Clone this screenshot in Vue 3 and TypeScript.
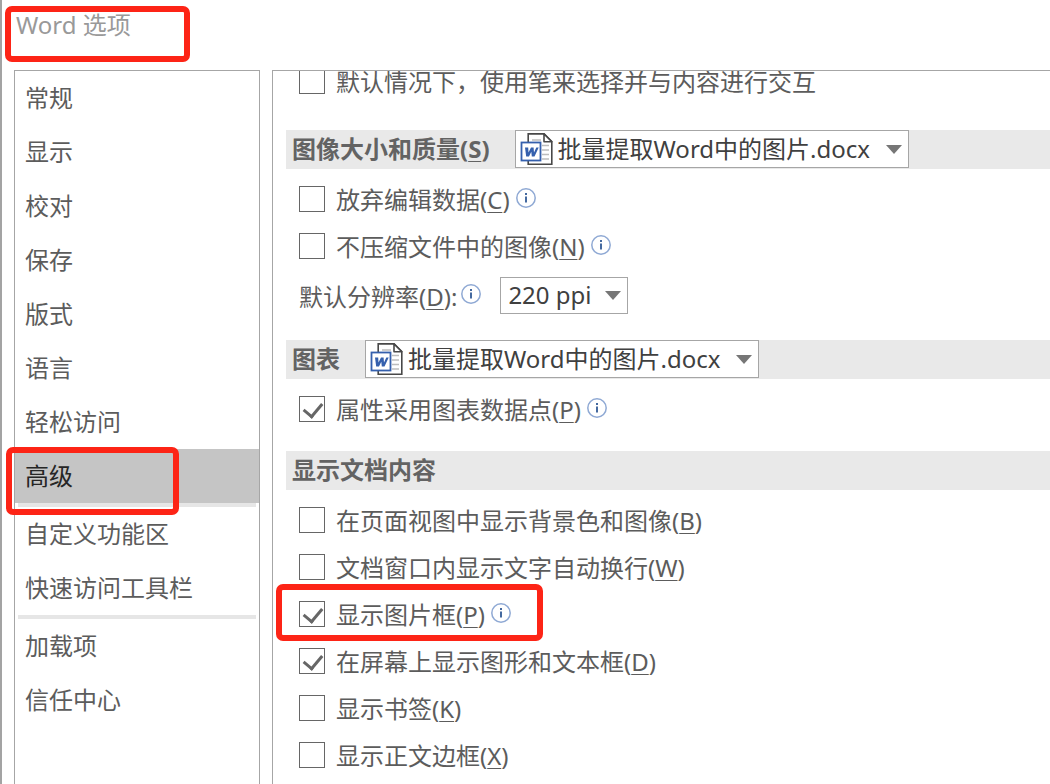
<script setup lang="ts">
import { ref } from 'vue'

interface Option {
  id: string
  text: string
  accessKey?: string
  info?: boolean
  checked: boolean
  framed?: boolean
}

const documentName = '批量提取Word中的图片.docx'

const groups = [
  ['常规', '显示', '校对', '保存', '版式', '语言', '轻松访问', '高级'],
  ['自定义功能区', '快速访问工具栏'],
  ['加载项', '信任中心'],
]
const current = ref('高级')

const penOptions = ref<Option[]>([
  { id: 'pen', text: '默认情况下，使用笔来选择并与内容进行交互', checked: false },
])
const imageOptions = ref<Option[]>([
  { id: 'discard', text: '放弃编辑数据', accessKey: 'C', info: true, checked: false },
  { id: 'nocompress', text: '不压缩文件中的图像', accessKey: 'N', info: true, checked: false },
])
const chartOptions = ref<Option[]>([
  { id: 'datapoint', text: '属性采用图表数据点', accessKey: 'P', info: true, checked: true },
])
const contentOptions = ref<Option[]>([
  { id: 'background', text: '在页面视图中显示背景色和图像', accessKey: 'B', checked: false },
  { id: 'wrap', text: '文档窗口内显示文字自动换行', accessKey: 'W', checked: false },
  { id: 'placeholder', text: '显示图片框', accessKey: 'P', info: true, checked: true, framed: true },
  { id: 'drawings', text: '在屏幕上显示图形和文本框', accessKey: 'D', checked: true },
  { id: 'bookmarks', text: '显示书签', accessKey: 'K', checked: false },
  { id: 'boundaries', text: '显示正文边框', accessKey: 'X', checked: false },
])

const sections = [
  { id: 'pen-section', title: '', accessKey: '', picker: false, resolution: false, options: penOptions },
  { id: 'image-section', title: '图像大小和质量', accessKey: 'S', picker: true, resolution: true, options: imageOptions },
  { id: 'chart-section', title: '图表', accessKey: '', picker: true, resolution: false, options: chartOptions },
  { id: 'content-section', title: '显示文档内容', accessKey: '', picker: false, resolution: false, options: contentOptions },
]
</script>

<template>
  <div class="window">
    <header class="titlebar">
      <h1>Word 选项</h1>
      <span class="frame frame-title"></span>
    </header>

    <div class="body">
      <nav class="sidebar">
        <ul v-for="(group, g) in groups" :key="g">
          <li v-for="name in group" :key="name">
            <button type="button" :class="{ active: name === current }" @click="current = name">{{ name }}</button>
            <span v-if="name === '高级'" class="frame frame-nav"></span>
          </li>
        </ul>
      </nav>

      <main class="content">
        <section v-for="section in sections" :key="section.id">
          <div v-if="section.title" class="heading">
            <h2>
              <label v-if="section.picker" :for="section.id">{{ section.title }}<template v-if="section.accessKey">(<u>{{ section.accessKey }}</u>)</template></label>
              <template v-else>{{ section.title }}</template>
            </h2>
            <div v-if="section.picker" class="combo">
              <svg class="doc" width="34" height="34" viewBox="0 0 34 34" aria-hidden="true">
                <path d="M8.200 1.900H24l7.800 7.800v22.500H8.200z" fill="#fff" stroke="#484848" stroke-width="1.600" />
                <path d="M24 1.900v7.800h7.800z" fill="#fff" stroke="#484848" stroke-width="1.600" stroke-linejoin="round" />
                <path d="M12 8h9M22 13.500h7M22 18h7M22 22.500h7M22 27h7" stroke="#bdbdbd" stroke-width="1.500" />
                <rect x="1.500" y="10.500" width="19" height="18" fill="#fff" stroke="#3560ad" stroke-width="1.800" />
                <path d="M5 15.500h3.200l.3 5 2.500-5h2.600l.4 5 2.300-5h2.400l-4.200 9h-2.700l-.5-4.800-2.300 4.800H6.200z" fill="#3560ad" />
              </svg>
              <select :id="section.id">
                <option>{{ documentName }}</option>
              </select>
              <svg class="arrow" width="16" height="9" viewBox="0 0 16 9" aria-hidden="true"><path d="M0 0h16L8 9z" fill="#767676" /></svg>
            </div>
          </div>

          <div class="options">
            <div v-for="option in section.options.value" :key="option.id" class="row">
              <input :id="option.id" v-model="option.checked" type="checkbox" />
              <label :for="option.id">{{ option.text }}<template v-if="option.accessKey">(<u>{{ option.accessKey }}</u>)</template></label>
              <svg v-if="option.info" class="info" width="20" height="20" viewBox="0 0 20 20" aria-hidden="true">
                <circle cx="10" cy="10" r="9.200" fill="#fff" stroke="#8fa9d4" stroke-width="1.500" />
                <path d="M10 5v2M10 8.500v6" stroke="#44699f" stroke-width="2" />
              </svg>
              <span v-if="option.framed" class="frame frame-option"></span>
            </div>
            <div v-if="section.resolution" class="row resolution">
              <label for="ppi">默认分辨率(<u>D</u>):</label>
              <svg class="info" width="20" height="20" viewBox="0 0 20 20" aria-hidden="true">
                <circle cx="10" cy="10" r="9.200" fill="#fff" stroke="#8fa9d4" stroke-width="1.500" />
                <path d="M10 5v2M10 8.500v6" stroke="#44699f" stroke-width="2" />
              </svg>
              <div class="combo small">
                <select id="ppi">
                  <option>220 ppi</option>
                </select>
                <svg class="arrow" width="16" height="9" viewBox="0 0 16 9" aria-hidden="true"><path d="M0 0h16L8 9z" fill="#767676" /></svg>
              </div>
            </div>
          </div>
        </section>
      </main>
    </div>
  </div>
</template>

<style>
body {
  margin: 0;
  background: #fff;
}
</style>

<style scoped>
* {
  box-sizing: border-box;
}

.window {
  display: flex;
  flex-direction: column;
  height: 100vh;
  overflow: hidden;
  border-left: 2px solid #a3a3a3;
  background: #fff;
  color: #5c5c5c;
  font-family: "Noto Sans", "Noto Sans CJK SC", sans-serif;
  font-size: 24px;
  line-height: 32px;
}

button,
select {
  font: inherit;
  color: inherit;
}

.titlebar {
  position: relative;
  flex: none;
  height: 70px;
  padding: 9px 14px;
}

h1 {
  margin: 0;
  font-size: 24px;
  font-weight: 400;
  line-height: 32px;
  color: #999;
}

.body {
  display: flex;
  flex: 1;
  gap: 12px;
  min-height: 0;
  padding-left: 12px;
}

.sidebar {
  flex: none;
  width: 246px;
  border: 1px solid #a6a6a6;
  border-bottom: 0;
}

ul {
  margin: 0;
  padding: 0;
  list-style: none;
}

ul + ul::before {
  content: "";
  display: block;
  height: 4px;
  margin: 0 3px;
  background: #e6e6e6;
}

li {
  position: relative;
}

li button {
  display: block;
  width: 100%;
  height: 54px;
  padding: 0 10px;
  border: 0;
  background: none;
  text-align: left;
}

li button.active {
  background: #c5c5c5;
  color: #262626;
}

.content {
  flex: 1;
  min-width: 0;
  overflow: hidden;
  padding-left: 13px;
  border-top: 1px solid #a6a6a6;
  border-left: 1px solid #a6a6a6;
}

section:first-child {
  margin-top: -20px;
}

section + section {
  margin-top: 19px;
}

section:first-child + section {
  margin-top: 26px;
}

.heading {
  display: flex;
  gap: 25px;
  height: 39px;
  padding-left: 6px;
  background: #e9e9e9;
}

h2 {
  margin: 0;
  font-size: 24px;
  font-weight: 700;
  line-height: 38px;
  color: #636363;
}

u {
  text-decoration-thickness: 1px;
  text-underline-offset: 3px;
}

.combo {
  position: relative;
  display: flex;
  align-items: center;
  width: 394px;
  height: 38px;
  border: 1px solid #a6a6a6;
  background: #fff;
  color: #404040;
}

.combo select {
  width: 100%;
  height: 100%;
  padding: 0 0 0 42px;
  border: 0;
  background: none;
  appearance: none;
}

.combo svg {
  position: absolute;
  pointer-events: none;
}

.doc {
  left: 4px;
}

.arrow {
  right: 6px;
}

.combo.small {
  width: 128px;
  height: 37px;
  margin-left: 19px;
}

.combo.small select {
  padding-left: 7px;
}

.options {
  padding: 6px 0 0 13px;
}

.row {
  position: relative;
  display: flex;
  align-items: center;
  height: 47px;
}

.row label {
  padding-top: 3px;
}

.resolution {
  height: 52px;
}

input {
  flex: none;
  width: 26px;
  height: 26px;
  margin: 0 11px 0 0;
  border: 1px solid #666;
  background: #fff;
  appearance: none;
}

input:checked::before {
  content: "";
  display: block;
  width: 9px;
  height: 15px;
  margin: 2px 0 0 7px;
  border: solid #666;
  border-width: 0 3px 3px 0;
  transform: rotate(40deg);
}

.info {
  flex: none;
  margin: 0 0 2px 6px;
}

.resolution .info {
  margin-left: 4px;
}

.frame {
  position: absolute;
  z-index: 1;
  border: 6px solid #fd2416;
  border-radius: 7px;
  pointer-events: none;
}

.frame-title {
  left: 3px;
  top: 6px;
  width: 185px;
  height: 56px;
}

.frame-nav {
  left: -9px;
  top: -2px;
  width: 173px;
  height: 68px;
}

.frame-option {
  left: -23px;
  top: -6px;
  width: 267px;
  height: 57px;
}
</style>
